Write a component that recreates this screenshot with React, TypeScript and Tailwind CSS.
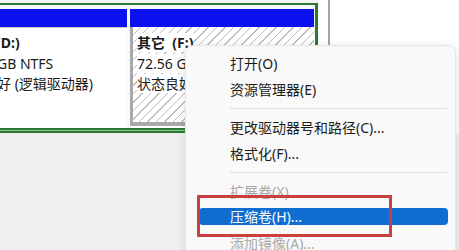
const font = "font-['Noto_Sans','Noto_Sans_CJK_SC',sans-serif]";

const MenuItem = ({ label, disabled }: { label: string; disabled?: boolean }) => (
  <div
    className={`flex h-[26px] items-center pl-[44px] text-[14px] ${
      disabled ? "text-[#a8a8a8]" : "text-[#1b1b1b]"
    }`}
  >
    {label}
  </div>
);

const Separator = () => (
  <div className="flex h-[12px] items-center pl-[44px] pr-[8px]">
    <div className="h-px w-full bg-[#dedede]" />
  </div>
);

const ContextMenu = () => (
  <div className="absolute left-[185px] top-[45px] h-[230px] w-[271px] rounded-[8px] border border-[#e6e6e6] bg-[#f9f9f9] pt-[4px] shadow-[0_2px_10px_rgba(0,0,0,0.12)]">
    <MenuItem label="打开(O)" />
    <MenuItem label="资源管理器(E)" />
    <Separator />
    <MenuItem label="更改驱动器号和路径(C)..." />
    <MenuItem label="格式化(F)..." />
    <Separator />
    <MenuItem label="扩展卷(X)..." disabled />
    <div className="h-[26px] pt-[4px]">
      <div className="ml-[13px] flex h-[17px] w-[249px] items-center rounded-[4px] bg-[#0f6cd0] pl-[31px] text-[14px] text-white">
        压缩卷(H)...
      </div>
    </div>
    <MenuItem label="添加镜像(A)..." disabled />
  </div>
);

export default function App() {
  return (
    <div className={`relative h-[250px] w-[459px] overflow-hidden bg-white ${font}`}>
      <div className="flex">
        <div className="w-[318px]">
          <div className="h-[3px] bg-[#f3f6f2]" />
          <div className="border-t-2 border-r-[3px] border-[#2c7a31] bg-[#f7f9fb] pt-[4px]">
            <div className="flex gap-[3px] pr-[1px]">
              {/* left partition */}
              <div className="flex w-[127px] flex-col">
                <div className="h-[18px] bg-[#0b10ee]" />
                <div className="h-[101px] border-t border-[#c9c9c9] bg-white pt-[5px] text-[14px] leading-[20.5px] text-[#1b1b1b]">
                  <div className="ml-[-4px] font-bold whitespace-nowrap">(D:)</div>
                  <div className="ml-[-3px] whitespace-nowrap">GB NTFS</div>
                  <div className="ml-[-3px] whitespace-nowrap">好 (逻辑驱动器)</div>
                </div>
              </div>
              {/* right partition */}
              <div className="flex flex-1 flex-col">
                <div className="h-[18px] bg-[#0b10ee]" />
                <div className="h-[101px] bg-white pb-[2px]">
                  <div className="h-full border-l-[3px] border-b-[4px] border-[#a9a9a9] bg-[repeating-linear-gradient(135deg,#ffffff_0,#ffffff_5px,#bdbdbd_5px,#bdbdbd_6px)] pl-[4px] pt-[6px] text-[14px] leading-[20.5px] text-[#1b1b1b]">
                    <div className="whitespace-nowrap">
                      <span className="bg-white font-bold">其它&nbsp;&nbsp;(F:)</span>
                    </div>
                    <div className="whitespace-nowrap">
                      <span className="bg-white">72.56 GB NTFS</span>
                    </div>
                    <div className="whitespace-nowrap">
                      <span className="bg-white">状态良好 (逻辑驱动器)</span>
                    </div>
                  </div>
                </div>
              </div>
            </div>
          </div>
          <div className="border-r-[3px] border-[#2c7a31]">
            <div className="h-[2px] bg-[#2c7a31]" />
            <div className="h-px bg-[#8fc59a]" />
            <div className="h-[2px] bg-[#2c7a31]" />
          </div>
        </div>
        <div className="w-[10px]" />
        <div className="h-[133px] w-[2px] bg-[#a3a3a3]" />
      </div>
      <div className="h-[117px] bg-[#f0f0f0]" />

      <ContextMenu />
      <div className="absolute left-[197px] top-[195px] h-[42px] w-[195px] border-[3px] border-[#c9403e]" />
    </div>
  );
}
